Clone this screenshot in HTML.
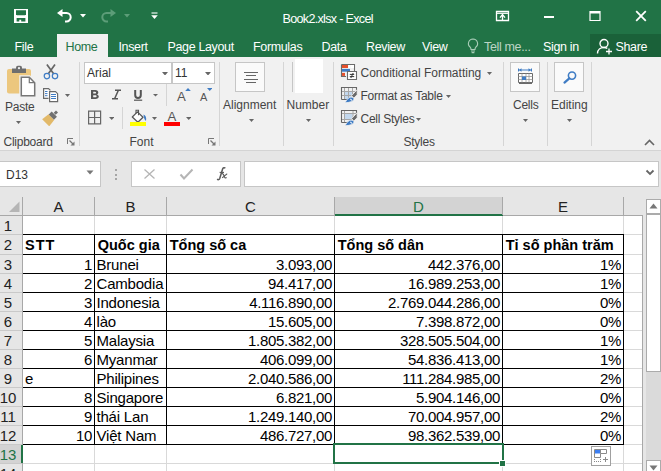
<!DOCTYPE html>
<html><head><meta charset="utf-8">
<style>
*{box-sizing:border-box;margin:0;padding:0}
html,body{width:661px;height:471px;overflow:hidden;background:#e6e6e6;font-family:"Liberation Sans",sans-serif}
.a{position:absolute;display:block}
.t{position:absolute;white-space:nowrap;line-height:1}
</style></head><body>
<div class="a" style="left:0px;top:0px;width:661px;height:57px;background:#217346;"></div>
<div class="a" style="left:590px;top:34px;width:71px;height:23px;background:#1a6139;"></div>
<div class="a" style="left:57px;top:34px;width:51px;height:23px;background:#f1f1f1;"></div>
<svg class="a" style="left:14px;top:9px;" width="14" height="14" viewBox="0 0 14 14"><path d="M0 0H14V14H0Z" fill="#fff"/><path d="M2 1.2H12V5.2L11 6.3H3L2 5.2Z" fill="#217346"/><path d="M2.6 9H11.4V12.6H7.2V10.8H5.3V12.6H2.6Z" fill="#217346"/></svg>
<svg class="a" style="left:55px;top:8px;" width="20" height="16" viewBox="0 0 20 16"><path d="M5 5H11.5A4.2 4.2 0 0 1 11.5 13.4H10" fill="none" stroke="#fff" stroke-width="2"/><path d="M2 5L7.5 1V9Z" fill="#fff"/></svg>
<svg class="a" style="left:79.5px;top:14px;" width="6" height="3.5" viewBox="0 0 6 3.5"><path d="M0 0H6L3.0 3.5Z" fill="#fff"/></svg>
<svg class="a" style="left:98px;top:8px;" width="20" height="16" viewBox="0 0 20 16"><path d="M15 5H8.5A4.2 4.2 0 0 0 8.5 13.4H10" fill="none" stroke="#5c9d78" stroke-width="2"/><path d="M18 5L12.5 1V9Z" fill="#5c9d78"/></svg>
<svg class="a" style="left:123.5px;top:14px;" width="6" height="3.5" viewBox="0 0 6 3.5"><path d="M0 0H6L3.0 3.5Z" fill="#5c9d78"/></svg>
<svg class="a" style="left:151px;top:12px;" width="7" height="8" viewBox="0 0 7 8"><path d="M0.5 1H6.5" stroke="#fff" stroke-width="1.1"/><path d="M0.2 3.3H6.8L3.5 7Z" fill="#fff"/></svg>
<div class="t" style="left:282.5px;top:13.03px;font-size:12.6px;color:#ffffff;letter-spacing:-0.7px;">Book2.xlsx - Excel</div>
<svg class="a" style="left:495px;top:10px;" width="15" height="12" viewBox="0 0 15 12"><path d="M1.5 1.5H13.5V10.5H1.5Z" fill="none" stroke="#fff" stroke-width="1.3"/><path d="M1.5 3.3H13.5" stroke="#fff" stroke-width="1.2"/><path d="M7.5 10.5V5" stroke="#fff" stroke-width="1.3"/><path d="M5 7.6L7.5 4.6L10 7.6" fill="none" stroke="#fff" stroke-width="1.4"/></svg>
<div class="a" style="left:544px;top:16px;width:10px;height:2px;background:#fff;"></div>
<svg class="a" style="left:589px;top:10px;" width="12" height="12" viewBox="0 0 12 12"><path d="M1 1.5H11V10.5H1Z" fill="none" stroke="#fff" stroke-width="1.2"/><path d="M1 2.5H11" stroke="#fff" stroke-width="2"/></svg>
<svg class="a" style="left:635px;top:10px;" width="12" height="12" viewBox="0 0 12 12"><path d="M1.2 1.2L10.8 10.8M10.8 1.2L1.2 10.8" stroke="#fff" stroke-width="1.8"/></svg>
<div class="t" style="left:14.5px;top:41.02px;font-size:12.5px;color:#fff;letter-spacing:-0.35px;">File</div>
<div class="t" style="left:65.5px;top:41.02px;font-size:12.5px;color:#217346;letter-spacing:-0.35px;">Home</div>
<div class="t" style="left:118.5px;top:41.02px;font-size:12.5px;color:#fff;letter-spacing:-0.35px;">Insert</div>
<div class="t" style="left:167.5px;top:41.02px;font-size:12.5px;color:#fff;letter-spacing:-0.35px;">Page Layout</div>
<div class="t" style="left:253px;top:41.02px;font-size:12.5px;color:#fff;letter-spacing:-0.35px;">Formulas</div>
<div class="t" style="left:321.5px;top:41.02px;font-size:12.5px;color:#fff;letter-spacing:-0.35px;">Data</div>
<div class="t" style="left:366px;top:41.02px;font-size:12.5px;color:#fff;letter-spacing:-0.35px;">Review</div>
<div class="t" style="left:422px;top:41.02px;font-size:12.5px;color:#fff;letter-spacing:-0.35px;">View</div>
<div class="t" style="left:484px;top:41.02px;font-size:12.5px;color:#bcd5c5;letter-spacing:-0.35px;">Tell me...</div>
<div class="t" style="left:543px;top:41.02px;font-size:12.5px;color:#fff;letter-spacing:-0.35px;">Sign in</div>
<div class="t" style="left:615.5px;top:41.02px;font-size:12.5px;color:#fff;letter-spacing:-0.35px;">Share</div>
<svg class="a" style="left:466px;top:37px;" width="14" height="17" viewBox="0 0 14 17"><path d="M7 2A4.6 4.6 0 0 0 4.3 10.3C5 11 5 11.6 5 12.5H9C9 11.6 9 11 9.7 10.3A4.6 4.6 0 0 0 7 2Z" fill="none" stroke="#a9cdb8" stroke-width="1.1"/><path d="M5 14H9M5.6 15.6H8.4" stroke="#a9cdb8" stroke-width="1.1"/></svg>
<svg class="a" style="left:596px;top:38px;" width="18" height="17" viewBox="0 0 18 17"><circle cx="8" cy="5.5" r="4" fill="none" stroke="#fff" stroke-width="1.4"/><path d="M1.5 15.5C1.5 11.5 4.5 9.5 8 9.5C9.5 9.5 10.5 9.9 11.3 10.3" fill="none" stroke="#fff" stroke-width="1.4"/><path d="M13 10.5V16.5M10 13.5H16" stroke="#fff" stroke-width="1.3"/></svg>
<div class="a" style="left:0px;top:57px;width:661px;height:93px;background:#f1f1f1;"></div>
<div class="a" style="left:0px;top:150px;width:661px;height:1px;background:#d4d4d4;"></div>
<div class="a" style="left:79px;top:62px;width:1px;height:84px;background:#d5d5d5;"></div>
<div class="a" style="left:219px;top:62px;width:1px;height:84px;background:#d5d5d5;"></div>
<div class="a" style="left:283px;top:62px;width:1px;height:84px;background:#d5d5d5;"></div>
<div class="a" style="left:333px;top:62px;width:1px;height:84px;background:#d5d5d5;"></div>
<div class="a" style="left:503px;top:62px;width:1px;height:84px;background:#d5d5d5;"></div>
<div class="a" style="left:547px;top:62px;width:1px;height:84px;background:#d5d5d5;"></div>
<div class="a" style="left:591px;top:62px;width:1px;height:84px;background:#d5d5d5;"></div>
<div class="t" style="left:3.5px;top:135.84px;font-size:12px;color:#444;letter-spacing:-0.25px;">Clipboard</div>
<div class="t" style="left:129.5px;top:135.84px;font-size:12px;color:#444;">Font</div>
<div class="t" style="left:403.5px;top:135.84px;font-size:12px;color:#444;letter-spacing:-0.25px;">Styles</div>
<svg class="a" style="left:67px;top:138px;" width="8" height="8" viewBox="0 0 8 8"><path d="M0.5 6V0.5H6" fill="none" stroke="#777" stroke-width="1"/><path d="M2.5 2.5L6.5 6.5" stroke="#777" stroke-width="1.2"/><path d="M7.5 3.5V7.5H3.5Z" fill="#777"/></svg>
<svg class="a" style="left:208px;top:138px;" width="8" height="8" viewBox="0 0 8 8"><path d="M0.5 6V0.5H6" fill="none" stroke="#777" stroke-width="1"/><path d="M2.5 2.5L6.5 6.5" stroke="#777" stroke-width="1.2"/><path d="M7.5 3.5V7.5H3.5Z" fill="#777"/></svg>
<svg class="a" style="left:644px;top:139px;" width="11" height="7" viewBox="0 0 11 7"><path d="M1 6L5.5 1.5L10 6" fill="none" stroke="#666" stroke-width="1.6"/></svg>
<svg class="a" style="left:5px;top:64px;" width="32" height="34" viewBox="0 0 32 34"><rect x="2" y="5" width="24" height="24.5" rx="2" fill="#ecc77e"/><path d="M7 4.5H21V9H7Z" fill="#6e6e6e" stroke="#f1f1f1" stroke-width="0"/><path d="M11 5V3.6A1.8 1.8 0 0 1 12.8 1.8H15.2A1.8 1.8 0 0 1 17 3.6V5Z" fill="#6e6e6e"/><circle cx="14" cy="4.2" r="1.1" fill="#f1f1f1"/><path d="M15.5 12.5H24.5L30.5 18.5V32.5H15.5Z" fill="#fff" stroke="#f1f1f1" stroke-width="2.5"/><path d="M16.3 13.3H24.3L29.7 18.7V31.7H16.3Z" fill="#fff" stroke="#777" stroke-width="1.5"/><path d="M24.3 13.3V18.7H29.7" fill="none" stroke="#777" stroke-width="1.2"/></svg>
<div class="t" style="left:5px;top:100.84px;font-size:12px;color:#444;letter-spacing:-0.25px;">Paste</div>
<svg class="a" style="left:15.5px;top:120.5px;" width="5" height="3" viewBox="0 0 5 3"><path d="M0 0H5L2.5 3Z" fill="#666"/></svg>
<svg class="a" style="left:42px;top:63px;" width="17" height="17" viewBox="0 0 17 17"><path d="M4.9 1.5L11.6 10.8M13 1.5L6.3 10.8" stroke="#666" stroke-width="1.7"/><circle cx="4.9" cy="13.1" r="2.7" fill="#f1f1f1" stroke="#3f7cc4" stroke-width="1.2"/><circle cx="13" cy="13.1" r="2.7" fill="#f1f1f1" stroke="#3f7cc4" stroke-width="1.2"/></svg>
<svg class="a" style="left:42px;top:87px;" width="18" height="16" viewBox="0 0 18 16"><path d="M1.6 1.6H6.5L8 3V11.4H1.6Z" fill="#fff" stroke="#6a6a6a" stroke-width="1.2"/><path d="M3 4.5H5.5M3 6.6H5.5M3 8.7H5.5" stroke="#3f7cc4" stroke-width="1"/><path d="M7.6 4.6H13.5L15.6 6.7V14.6H7.6Z" fill="#fff" stroke="#f1f1f1" stroke-width="2.2"/><path d="M7.6 4.6H13.5L15.6 6.7V14.6H7.6Z" fill="#fff" stroke="#6a6a6a" stroke-width="1.2"/><path d="M9 7.5H14M9 9.5H14M9 11.5H14" stroke="#3f7cc4" stroke-width="1"/></svg>
<svg class="a" style="left:65.0px;top:94px;" width="5" height="3" viewBox="0 0 5 3"><path d="M0 0H5L2.5 3Z" fill="#666"/></svg>
<svg class="a" style="left:42px;top:109px;" width="18" height="17" viewBox="0 0 18 17"><g transform="rotate(45 9 8.5)"><path d="M5 8H13L14 16H4Z" fill="#e2b969"/><rect x="5.3" y="3.8" width="7.4" height="4.2" fill="#707070"/><rect x="7.6" y="0" width="2.8" height="3.3" fill="#707070"/></g></svg>
<div class="a" style="left:84px;top:62px;width:88px;height:22px;background:#fff;border:1px solid #c6c6c6;"></div>
<div class="t" style="left:87px;top:66.84px;font-size:12px;color:#333;">Arial</div>
<svg class="a" style="left:162.0px;top:71.5px;" width="6" height="3.5" viewBox="0 0 6 3.5"><path d="M0 0H6L3.0 3.5Z" fill="#666"/></svg>
<div class="a" style="left:172px;top:62px;width:43px;height:22px;background:#fff;border:1px solid #c6c6c6;"></div>
<div class="t" style="left:175px;top:66.84px;font-size:12px;color:#333;">11</div>
<svg class="a" style="left:204.5px;top:71.5px;" width="6" height="3.5" viewBox="0 0 6 3.5"><path d="M0 0H6L3.0 3.5Z" fill="#666"/></svg>
<svg class="a" style="left:90px;top:89px;" width="10" height="11" viewBox="0 0 10 11"><path d="M1 1H5.2C7.3 1 8.3 2 8.3 3.4C8.3 4.4 7.7 5.1 6.8 5.4C8 5.6 8.8 6.5 8.8 7.6C8.8 9.3 7.5 10 5.5 10H1Z M3.2 2.7V4.6H4.9C5.7 4.6 6.1 4.2 6.1 3.6C6.1 3 5.7 2.7 4.9 2.7Z M3.2 6.2V8.3H5.2C6.1 8.3 6.6 7.9 6.6 7.2C6.6 6.6 6.1 6.2 5.2 6.2Z" fill="#555" fill-rule="evenodd"/></svg>
<svg class="a" style="left:111px;top:89px;" width="11" height="11" viewBox="0 0 11 11"><path d="M4 1.2H10M1 9.8H7M7.4 1.2L3.6 9.8" stroke="#555" stroke-width="1.5"/></svg>
<svg class="a" style="left:133px;top:89px;" width="11" height="12" viewBox="0 0 11 12"><path d="M2.2 1V6C2.2 8 3.3 9 5 9C6.7 9 7.8 8 7.8 6V1" fill="none" stroke="#555" stroke-width="2"/><path d="M1 11.2H9.2" stroke="#555" stroke-width="1.2"/></svg>
<svg class="a" style="left:153.0px;top:94.3px;" width="5" height="2.5" viewBox="0 0 5 2.5"><path d="M0 0H5L2.5 2.5Z" fill="#666"/></svg>
<div class="a" style="left:166px;top:84px;width:1px;height:22px;background:#d5d5d5;"></div>
<div class="t" style="left:177px;top:89.83px;font-size:13.2px;color:#555;">A</div>
<svg class="a" style="left:184.5px;top:87.5px;" width="6" height="3.2" viewBox="0 0 6 3.2"><path d="M0 3.2L3 0L6 3.2Z" fill="#3f7cc4"/></svg>
<div class="t" style="left:200px;top:91.69px;font-size:11px;color:#555;">A</div>
<svg class="a" style="left:206.75px;top:87.6px;" width="5.5" height="3" viewBox="0 0 5.5 3"><path d="M0 0H5.5L2.75 3Z" fill="#3f7cc4"/></svg>
<svg class="a" style="left:88px;top:110px;" width="14" height="15" viewBox="0 0 14 15"><path d="M0.6 1.1H12.6V13.9H0.6ZM6.6 1.1V13.9M0.6 7.5H12.6" fill="none" stroke="#666" stroke-width="1.2"/></svg>
<svg class="a" style="left:108.75px;top:117.3px;" width="5.5" height="3" viewBox="0 0 5.5 3"><path d="M0 0H5.5L2.75 3Z" fill="#666"/></svg>
<div class="a" style="left:122px;top:107px;width:1px;height:22px;background:#d5d5d5;"></div>
<svg class="a" style="left:129px;top:107px;" width="19" height="16" viewBox="0 0 19 16"><path d="M3.3 10L8.4 4.9L14 10.2L8.9 15.2Z" fill="#fff" stroke="#555" stroke-width="1.2" stroke-linejoin="round"/><path d="M7 6.5V3.2H9.5V8.3" fill="none" stroke="#555" stroke-width="1.1"/><path d="M14.5 7.5C16.8 8.3 17.6 10.8 17 14C15.6 13 14.6 10.5 14.5 7.5Z" fill="#3f7cc4"/></svg>
<div class="a" style="left:130px;top:122px;width:16px;height:4px;background:#ffff00;"></div>
<svg class="a" style="left:152.0px;top:117.3px;" width="5" height="3" viewBox="0 0 5 3"><path d="M0 0H5L2.5 3Z" fill="#666"/></svg>
<div class="t" style="left:167.5px;top:110.33px;font-size:13.2px;color:#555;">A</div>
<div class="a" style="left:164px;top:122px;width:16px;height:4px;background:#ff0000;"></div>
<svg class="a" style="left:185.75px;top:117.3px;" width="5.5" height="3" viewBox="0 0 5.5 3"><path d="M0 0H5.5L2.75 3Z" fill="#666"/></svg>
<div class="a" style="left:235px;top:62px;width:30px;height:30px;background:#fafafa;border:1px solid #c6c6c6;"></div>
<svg class="a" style="left:243px;top:71px;" width="16" height="13" viewBox="0 0 16 13"><path d="M1 1.5H15M3 4.5H13M1 8.5H15M3 11.5H13" stroke="#666" stroke-width="1"/></svg>
<div class="t" style="left:223px;top:98.84px;font-size:12px;color:#444;">Alignment</div>
<svg class="a" style="left:249.0px;top:119.3px;" width="5" height="3" viewBox="0 0 5 3"><path d="M0 0H5L2.5 3Z" fill="#666"/></svg>
<div class="a" style="left:292px;top:62px;width:1px;height:30px;background:#c6c6c6;"></div>
<div class="a" style="left:295px;top:59px;width:28px;height:34px;background:#ffffff;"></div>
<div class="t" style="left:286.5px;top:98.84px;font-size:12px;color:#444;">Number</div>
<svg class="a" style="left:306.0px;top:119.3px;" width="5" height="3" viewBox="0 0 5 3"><path d="M0 0H5L2.5 3Z" fill="#666"/></svg>
<svg class="a" style="left:340px;top:63px;" width="18" height="18" viewBox="0 0 18 18"><path d="M1.5 1.5H14.5V13" fill="none" stroke="#6a6a6a" stroke-width="1.1"/><path d="M1.5 1.5V13.5H6" fill="none" stroke="#6a6a6a" stroke-width="1.1"/><path d="M2 2H8V5H2Z" fill="#e4502c"/><path d="M8.5 2H10.5V5H8.5ZM11 2H14V5H11Z" fill="#fff"/><path d="M2 5.9H10V8.7H2Z" fill="#3f7cc4"/><path d="M2 9.9H5V12.9H2Z" fill="#e4502c"/><path d="M7.5 8.5H16.5V16.5H7.5Z" fill="#fff" stroke="#6a6a6a" stroke-width="1.1"/><path d="M9.8 11.4H14.2M9.8 13.6H14.2M13.2 10L10.8 15" stroke="#333" stroke-width="1"/></svg>
<div class="t" style="left:360.5px;top:66.84px;font-size:12px;color:#444;">Conditional Formatting</div>
<svg class="a" style="left:487.0px;top:71.5px;" width="5" height="3" viewBox="0 0 5 3"><path d="M0 0H5L2.5 3Z" fill="#666"/></svg>
<svg class="a" style="left:340px;top:86px;" width="19" height="18" viewBox="0 0 19 18"><path d="M5 6H12V13H5Z" fill="#c3d8ee"/><path d="M4.5 2V13M8.5 2V13M12.5 2V11M2 5.5H16M2 9.5H14" stroke="#a6a6a6" stroke-width="1"/><path d="M1.5 13.5V1.5H16.5V5.5M1.5 13.5H7" fill="none" stroke="#666" stroke-width="1.1"/><path d="M17.2 3.6V8.7L13.7 12.3L11.6 9.6Z" fill="#6a6a6a" stroke="#f1f1f1" stroke-width="0.9"/><path d="M5 16.8C6.4 14.2 7.5 12.6 9.3 11.6C10.8 10.9 13 10.9 13.9 12.2C14.4 13.2 13.3 14.8 11.5 15.6C9.5 16.4 7 16.7 5 16.8Z" fill="#3f7cc4" stroke="#f1f1f1" stroke-width="0.8"/><path d="M10.4 12.8L11.9 14.5" fill="none" stroke="#fff" stroke-width="1.1"/></svg>
<div class="t" style="left:360.5px;top:89.84px;font-size:12px;color:#444;letter-spacing:-0.25px;">Format as Table</div>
<svg class="a" style="left:446.0px;top:94.5px;" width="5" height="3" viewBox="0 0 5 3"><path d="M0 0H5L2.5 3Z" fill="#666"/></svg>
<svg class="a" style="left:340px;top:109px;" width="19" height="18" viewBox="0 0 19 18"><path d="M5 5H12.5V10H5Z" fill="#c3d8ee"/><path d="M4.5 2V13M13 2V10M2 4.5H16M2 10.5H12" stroke="#a6a6a6" stroke-width="1"/><path d="M1.5 13.5V1.5H16.5V5.5M1.5 13.5H7" fill="none" stroke="#666" stroke-width="1.1"/><path d="M17.2 3.6V8.7L13.7 12.3L11.6 9.6Z" fill="#6a6a6a" stroke="#f1f1f1" stroke-width="0.9"/><path d="M5 16.8C6.4 14.2 7.5 12.6 9.3 11.6C10.8 10.9 13 10.9 13.9 12.2C14.4 13.2 13.3 14.8 11.5 15.6C9.5 16.4 7 16.7 5 16.8Z" fill="#3f7cc4" stroke="#f1f1f1" stroke-width="0.8"/><path d="M10.4 12.8L11.9 14.5" fill="none" stroke="#fff" stroke-width="1.1"/></svg>
<div class="t" style="left:360.5px;top:112.84px;font-size:12px;color:#444;letter-spacing:-0.25px;">Cell Styles</div>
<svg class="a" style="left:416.0px;top:117.5px;" width="5" height="3" viewBox="0 0 5 3"><path d="M0 0H5L2.5 3Z" fill="#666"/></svg>
<div class="a" style="left:510px;top:62px;width:30px;height:30px;background:#fafafa;border:1px solid #c6c6c6;"></div>
<svg class="a" style="left:516px;top:67px;" width="18" height="19" viewBox="0 0 18 19"><path d="M2.5 1.5V4.5M15.5 1.5V4.5M3 3H15" stroke="#3f7cc4" stroke-width="1"/><path d="M3 3L5.5 1.3V4.7ZM15 3L12.5 1.3V4.7Z" fill="#3f7cc4"/><path d="M2.5 6.5H16.5V15.5H2.5Z" fill="#fff" stroke="#6a6a6a" stroke-width="1"/><path d="M2.5 9.5H16.5M2.5 12.5H16.5M6 6.5V15.5M10 6.5V15.5M13 6.5V15.5" stroke="#9a9a9a" stroke-width="0.8"/><path d="M6 9.5H10V13H6Z" fill="#3f7cc4"/><path d="M3 16.5H16" stroke="#6a6a6a" stroke-width="1"/></svg>
<div class="t" style="left:513px;top:98.84px;font-size:12px;color:#444;letter-spacing:-0.25px;">Cells</div>
<svg class="a" style="left:523.0px;top:119.3px;" width="5" height="3" viewBox="0 0 5 3"><path d="M0 0H5L2.5 3Z" fill="#666"/></svg>
<div class="a" style="left:554px;top:62px;width:30px;height:30px;background:#fafafa;border:1px solid #c6c6c6;"></div>
<svg class="a" style="left:562px;top:70px;" width="16" height="14" viewBox="0 0 16 14"><circle cx="10" cy="5.6" r="3.6" fill="none" stroke="#3f7cc4" stroke-width="1.6"/><path d="M7.3 8.4L2.5 12.6" stroke="#3f7cc4" stroke-width="2.2" stroke-linecap="round"/></svg>
<div class="t" style="left:551px;top:98.84px;font-size:12px;color:#444;">Editing</div>
<svg class="a" style="left:567.0px;top:119.3px;" width="5" height="3" viewBox="0 0 5 3"><path d="M0 0H5L2.5 3Z" fill="#666"/></svg>
<div class="a" style="left:-1px;top:161px;width:102px;height:26px;background:#fff;border:1px solid #c6c6c6;"></div>
<div class="t" style="left:6px;top:168.84px;font-size:12px;color:#333;">D13</div>
<svg class="a" style="left:86px;top:170px;" width="8" height="5" viewBox="0 0 8 5"><path d="M0.5 0.5H7.5L4 4.5Z" fill="#777"/></svg>
<div class="a" style="left:114.5px;top:169px;width:2px;height:2px;background:#a6a6a6;"></div>
<div class="a" style="left:114.5px;top:173.5px;width:2px;height:2px;background:#a6a6a6;"></div>
<div class="a" style="left:114.5px;top:178px;width:2px;height:2px;background:#a6a6a6;"></div>
<div class="a" style="left:131px;top:161px;width:110px;height:26px;background:#fff;border:1px solid #c6c6c6;"></div>
<svg class="a" style="left:143px;top:168px;" width="14" height="12" viewBox="0 0 14 12"><path d="M1.5 1.5L11.5 10.5M11.5 1.5L1.5 10.5" stroke="#b5b5b5" stroke-width="1.3"/></svg>
<svg class="a" style="left:179px;top:168px;" width="15" height="13" viewBox="0 0 15 13"><path d="M1.5 6.5L5 10.5L13.5 1.5" fill="none" stroke="#b5b5b5" stroke-width="2"/></svg>
<svg class="a" style="left:214px;top:166px;" width="16" height="15" viewBox="0 0 16 15"><path d="M11.3 2.3C10.5 1.4 9.1 1.6 8.6 3.1L5.8 12.3C5.3 13.8 4.1 14 3.1 13.2" fill="none" stroke="#5a5a5a" stroke-width="1.5"/><path d="M5.6 6.4H10" stroke="#5a5a5a" stroke-width="1.1"/><path d="M7.8 7.8C8.8 7.4 9.4 8 9.8 9.2L10.6 11.2C11 12 11.8 12.2 12.6 11.6M13.2 7.8C12.6 7.9 11.2 9.5 8.2 11.8" fill="none" stroke="#5a5a5a" stroke-width="1.2"/></svg>
<div class="a" style="left:244px;top:161px;width:415px;height:26px;background:#fff;border:1px solid #c6c6c6;"></div>
<svg class="a" style="left:645px;top:169px;" width="10" height="7" viewBox="0 0 10 7"><path d="M1.5 1.5L5 5L8.5 1.5" fill="none" stroke="#666" stroke-width="1.8"/></svg>
<div class="a" style="left:0px;top:197px;width:643px;height:274px;background:#ffffff;"></div>
<div class="a" style="left:0px;top:197px;width:643px;height:18px;background:#e6e6e6;"></div>
<div class="a" style="left:0px;top:215px;width:22px;height:256px;background:#e6e6e6;"></div>
<svg class="a" style="left:9px;top:200px;" width="12" height="13" viewBox="0 0 12 13"><path d="M10.5 1.5V12H0Z" fill="#b5b5b5"/></svg>
<div class="a" style="left:335px;top:197px;width:167px;height:17px;background:#d3d3d3;"></div>
<div class="a" style="left:335px;top:214px;width:168px;height:2px;background:#217346;"></div>
<div class="a" style="left:23px;top:234px;width:620px;height:1px;background:#d9d9d9;"></div>
<div class="a" style="left:0px;top:234px;width:22px;height:1px;background:#c9c9c9;"></div>
<div class="a" style="left:23px;top:254px;width:620px;height:1px;background:#d9d9d9;"></div>
<div class="a" style="left:0px;top:254px;width:22px;height:1px;background:#c9c9c9;"></div>
<div class="a" style="left:23px;top:273px;width:620px;height:1px;background:#d9d9d9;"></div>
<div class="a" style="left:0px;top:273px;width:22px;height:1px;background:#c9c9c9;"></div>
<div class="a" style="left:23px;top:292px;width:620px;height:1px;background:#d9d9d9;"></div>
<div class="a" style="left:0px;top:292px;width:22px;height:1px;background:#c9c9c9;"></div>
<div class="a" style="left:23px;top:311px;width:620px;height:1px;background:#d9d9d9;"></div>
<div class="a" style="left:0px;top:311px;width:22px;height:1px;background:#c9c9c9;"></div>
<div class="a" style="left:23px;top:330px;width:620px;height:1px;background:#d9d9d9;"></div>
<div class="a" style="left:0px;top:330px;width:22px;height:1px;background:#c9c9c9;"></div>
<div class="a" style="left:23px;top:349px;width:620px;height:1px;background:#d9d9d9;"></div>
<div class="a" style="left:0px;top:349px;width:22px;height:1px;background:#c9c9c9;"></div>
<div class="a" style="left:23px;top:368px;width:620px;height:1px;background:#d9d9d9;"></div>
<div class="a" style="left:0px;top:368px;width:22px;height:1px;background:#c9c9c9;"></div>
<div class="a" style="left:23px;top:387px;width:620px;height:1px;background:#d9d9d9;"></div>
<div class="a" style="left:0px;top:387px;width:22px;height:1px;background:#c9c9c9;"></div>
<div class="a" style="left:23px;top:406px;width:620px;height:1px;background:#d9d9d9;"></div>
<div class="a" style="left:0px;top:406px;width:22px;height:1px;background:#c9c9c9;"></div>
<div class="a" style="left:23px;top:425px;width:620px;height:1px;background:#d9d9d9;"></div>
<div class="a" style="left:0px;top:425px;width:22px;height:1px;background:#c9c9c9;"></div>
<div class="a" style="left:23px;top:444px;width:620px;height:1px;background:#d9d9d9;"></div>
<div class="a" style="left:0px;top:444px;width:22px;height:1px;background:#c9c9c9;"></div>
<div class="a" style="left:23px;top:463px;width:620px;height:1px;background:#d9d9d9;"></div>
<div class="a" style="left:0px;top:463px;width:22px;height:1px;background:#c9c9c9;"></div>
<div class="a" style="left:94px;top:216px;width:1px;height:255px;background:#d9d9d9;"></div>
<div class="a" style="left:94px;top:197px;width:1px;height:18px;background:#a8a8a8;"></div>
<div class="a" style="left:166px;top:216px;width:1px;height:255px;background:#d9d9d9;"></div>
<div class="a" style="left:166px;top:197px;width:1px;height:18px;background:#a8a8a8;"></div>
<div class="a" style="left:334px;top:216px;width:1px;height:255px;background:#d9d9d9;"></div>
<div class="a" style="left:334px;top:197px;width:1px;height:18px;background:#a8a8a8;"></div>
<div class="a" style="left:502px;top:216px;width:1px;height:255px;background:#d9d9d9;"></div>
<div class="a" style="left:502px;top:197px;width:1px;height:18px;background:#a8a8a8;"></div>
<div class="a" style="left:623px;top:216px;width:1px;height:255px;background:#d9d9d9;"></div>
<div class="a" style="left:623px;top:197px;width:1px;height:18px;background:#a8a8a8;"></div>
<div class="a" style="left:0px;top:215px;width:335px;height:1px;background:#a8a8a8;"></div>
<div class="a" style="left:503px;top:215px;width:140px;height:1px;background:#a8a8a8;"></div>
<div class="a" style="left:22px;top:197px;width:1px;height:274px;background:#a8a8a8;"></div>
<div class="a" style="left:642px;top:215px;width:1px;height:256px;background:#a8a8a8;"></div>
<div class="t" style="left:-91.5px;width:300px;text-align:center;top:199.30px;font-size:15px;color:#222;">A</div>
<div class="t" style="left:-19.5px;width:300px;text-align:center;top:199.30px;font-size:15px;color:#222;">B</div>
<div class="t" style="left:100.5px;width:300px;text-align:center;top:199.30px;font-size:15px;color:#222;">C</div>
<div class="t" style="left:268.5px;width:300px;text-align:center;top:199.30px;font-size:15px;color:#217346;">D</div>
<div class="t" style="left:413.0px;width:300px;text-align:center;top:199.30px;font-size:15px;color:#222;">E</div>
<div class="t" style="left:-142px;width:300px;text-align:center;top:218.30px;font-size:15px;color:#222;">1</div>
<div class="t" style="left:-142px;width:300px;text-align:center;top:237.30px;font-size:15px;color:#222;">2</div>
<div class="t" style="left:-142px;width:300px;text-align:center;top:257.30px;font-size:15px;color:#222;">3</div>
<div class="t" style="left:-142px;width:300px;text-align:center;top:276.30px;font-size:15px;color:#222;">4</div>
<div class="t" style="left:-142px;width:300px;text-align:center;top:295.30px;font-size:15px;color:#222;">5</div>
<div class="t" style="left:-142px;width:300px;text-align:center;top:314.30px;font-size:15px;color:#222;">6</div>
<div class="t" style="left:-142px;width:300px;text-align:center;top:333.30px;font-size:15px;color:#222;">7</div>
<div class="t" style="left:-142px;width:300px;text-align:center;top:352.30px;font-size:15px;color:#222;">8</div>
<div class="t" style="left:-142px;width:300px;text-align:center;top:371.30px;font-size:15px;color:#222;">9</div>
<div class="t" style="left:-142px;width:300px;text-align:center;top:390.30px;font-size:15px;color:#222;">10</div>
<div class="t" style="left:-142px;width:300px;text-align:center;top:409.30px;font-size:15px;color:#222;">11</div>
<div class="t" style="left:-142px;width:300px;text-align:center;top:428.30px;font-size:15px;color:#222;">12</div>
<div class="a" style="left:0px;top:445px;width:21px;height:18px;background:#d3d3d3;"></div>
<div class="a" style="left:21px;top:445px;width:2px;height:18px;background:#217346;"></div>
<div class="t" style="left:-142px;width:300px;text-align:center;top:447.30px;font-size:15px;color:#217346;">13</div>
<div class="t" style="left:-142px;width:300px;text-align:center;top:466.30px;font-size:15px;color:#222;">14</div>
<div class="a" style="left:23px;top:234px;width:601px;height:1px;background:#000;"></div>
<div class="a" style="left:23px;top:254px;width:601px;height:1px;background:#000;"></div>
<div class="a" style="left:23px;top:273px;width:601px;height:1px;background:#000;"></div>
<div class="a" style="left:23px;top:292px;width:601px;height:1px;background:#000;"></div>
<div class="a" style="left:23px;top:311px;width:601px;height:1px;background:#000;"></div>
<div class="a" style="left:23px;top:330px;width:601px;height:1px;background:#000;"></div>
<div class="a" style="left:23px;top:349px;width:601px;height:1px;background:#000;"></div>
<div class="a" style="left:23px;top:368px;width:601px;height:1px;background:#000;"></div>
<div class="a" style="left:23px;top:387px;width:601px;height:1px;background:#000;"></div>
<div class="a" style="left:23px;top:406px;width:601px;height:1px;background:#000;"></div>
<div class="a" style="left:23px;top:425px;width:601px;height:1px;background:#000;"></div>
<div class="a" style="left:23px;top:444px;width:601px;height:1px;background:#000;"></div>
<div class="a" style="left:94px;top:234px;width:1px;height:211px;background:#000;"></div>
<div class="a" style="left:166px;top:234px;width:1px;height:211px;background:#000;"></div>
<div class="a" style="left:334px;top:234px;width:1px;height:211px;background:#000;"></div>
<div class="a" style="left:502px;top:234px;width:1px;height:211px;background:#000;"></div>
<div class="a" style="left:623px;top:234px;width:1px;height:211px;background:#000;"></div>
<div class="t" style="left:25.0px;top:237.73px;font-size:14.5px;color:#000;font-weight:bold;letter-spacing:1px;">STT</div>
<div class="t" style="left:97.7px;top:237.73px;font-size:14.5px;color:#000;font-weight:bold;">Quốc gia</div>
<div class="t" style="left:169.7px;top:237.73px;font-size:14.5px;color:#000;font-weight:bold;">Tổng số ca</div>
<div class="t" style="left:337.7px;top:237.73px;font-size:14.5px;color:#000;font-weight:bold;">Tổng số dân</div>
<div class="t" style="left:505.7px;top:237.73px;font-size:14.5px;color:#000;font-weight:bold;">Tỉ số phần trăm</div>
<div class="t" style="right:569px;top:257.30px;font-size:15px;color:#000;letter-spacing:-0.3px;">1</div>
<div class="t" style="left:96.5px;top:257.30px;font-size:15px;color:#000;letter-spacing:-0.2px;">Brunei</div>
<div class="t" style="right:329px;top:257.30px;font-size:15px;color:#000;letter-spacing:-0.3px;">3.093,00</div>
<div class="t" style="right:161px;top:257.30px;font-size:15px;color:#000;letter-spacing:-0.3px;">442.376,00</div>
<div class="t" style="right:40px;top:257.30px;font-size:15px;color:#000;letter-spacing:-0.3px;">1%</div>
<div class="t" style="right:569px;top:276.30px;font-size:15px;color:#000;letter-spacing:-0.3px;">2</div>
<div class="t" style="left:96.5px;top:276.30px;font-size:15px;color:#000;letter-spacing:-0.2px;">Cambodia</div>
<div class="t" style="right:329px;top:276.30px;font-size:15px;color:#000;letter-spacing:-0.3px;">94.417,00</div>
<div class="t" style="right:161px;top:276.30px;font-size:15px;color:#000;letter-spacing:-0.3px;">16.989.253,00</div>
<div class="t" style="right:40px;top:276.30px;font-size:15px;color:#000;letter-spacing:-0.3px;">1%</div>
<div class="t" style="right:569px;top:295.30px;font-size:15px;color:#000;letter-spacing:-0.3px;">3</div>
<div class="t" style="left:96.5px;top:295.30px;font-size:15px;color:#000;letter-spacing:-0.2px;">Indonesia</div>
<div class="t" style="right:329px;top:295.30px;font-size:15px;color:#000;letter-spacing:-0.3px;">4.116.890,00</div>
<div class="t" style="right:161px;top:295.30px;font-size:15px;color:#000;letter-spacing:-0.3px;">2.769.044.286,00</div>
<div class="t" style="right:40px;top:295.30px;font-size:15px;color:#000;letter-spacing:-0.3px;">0%</div>
<div class="t" style="right:569px;top:314.30px;font-size:15px;color:#000;letter-spacing:-0.3px;">4</div>
<div class="t" style="left:96.5px;top:314.30px;font-size:15px;color:#000;letter-spacing:-0.2px;">lào</div>
<div class="t" style="right:329px;top:314.30px;font-size:15px;color:#000;letter-spacing:-0.3px;">15.605,00</div>
<div class="t" style="right:161px;top:314.30px;font-size:15px;color:#000;letter-spacing:-0.3px;">7.398.872,00</div>
<div class="t" style="right:40px;top:314.30px;font-size:15px;color:#000;letter-spacing:-0.3px;">0%</div>
<div class="t" style="right:569px;top:333.30px;font-size:15px;color:#000;letter-spacing:-0.3px;">5</div>
<div class="t" style="left:96.5px;top:333.30px;font-size:15px;color:#000;letter-spacing:-0.2px;">Malaysia</div>
<div class="t" style="right:329px;top:333.30px;font-size:15px;color:#000;letter-spacing:-0.3px;">1.805.382,00</div>
<div class="t" style="right:161px;top:333.30px;font-size:15px;color:#000;letter-spacing:-0.3px;">328.505.504,00</div>
<div class="t" style="right:40px;top:333.30px;font-size:15px;color:#000;letter-spacing:-0.3px;">1%</div>
<div class="t" style="right:569px;top:352.30px;font-size:15px;color:#000;letter-spacing:-0.3px;">6</div>
<div class="t" style="left:96.5px;top:352.30px;font-size:15px;color:#000;letter-spacing:-0.2px;">Myanmar</div>
<div class="t" style="right:329px;top:352.30px;font-size:15px;color:#000;letter-spacing:-0.3px;">406.099,00</div>
<div class="t" style="right:161px;top:352.30px;font-size:15px;color:#000;letter-spacing:-0.3px;">54.836.413,00</div>
<div class="t" style="right:40px;top:352.30px;font-size:15px;color:#000;letter-spacing:-0.3px;">1%</div>
<div class="t" style="left:25.0px;top:371.30px;font-size:15px;color:#000;letter-spacing:-0.2px;">e</div>
<div class="t" style="left:96.5px;top:371.30px;font-size:15px;color:#000;letter-spacing:-0.2px;">Philipines</div>
<div class="t" style="right:329px;top:371.30px;font-size:15px;color:#000;letter-spacing:-0.3px;">2.040.586,00</div>
<div class="t" style="right:161px;top:371.30px;font-size:15px;color:#000;letter-spacing:-0.3px;">111.284.985,00</div>
<div class="t" style="right:40px;top:371.30px;font-size:15px;color:#000;letter-spacing:-0.3px;">2%</div>
<div class="t" style="right:569px;top:390.30px;font-size:15px;color:#000;letter-spacing:-0.3px;">8</div>
<div class="t" style="left:96.5px;top:390.30px;font-size:15px;color:#000;letter-spacing:-0.2px;">Singapore</div>
<div class="t" style="right:329px;top:390.30px;font-size:15px;color:#000;letter-spacing:-0.3px;">6.821,00</div>
<div class="t" style="right:161px;top:390.30px;font-size:15px;color:#000;letter-spacing:-0.3px;">5.904.146,00</div>
<div class="t" style="right:40px;top:390.30px;font-size:15px;color:#000;letter-spacing:-0.3px;">0%</div>
<div class="t" style="right:569px;top:409.30px;font-size:15px;color:#000;letter-spacing:-0.3px;">9</div>
<div class="t" style="left:96.5px;top:409.30px;font-size:15px;color:#000;letter-spacing:-0.2px;">thái Lan</div>
<div class="t" style="right:329px;top:409.30px;font-size:15px;color:#000;letter-spacing:-0.3px;">1.249.140,00</div>
<div class="t" style="right:161px;top:409.30px;font-size:15px;color:#000;letter-spacing:-0.3px;">70.004.957,00</div>
<div class="t" style="right:40px;top:409.30px;font-size:15px;color:#000;letter-spacing:-0.3px;">2%</div>
<div class="t" style="right:569px;top:428.30px;font-size:15px;color:#000;letter-spacing:-0.3px;">10</div>
<div class="t" style="left:96.5px;top:428.30px;font-size:15px;color:#000;letter-spacing:-0.2px;">Việt Nam</div>
<div class="t" style="right:329px;top:428.30px;font-size:15px;color:#000;letter-spacing:-0.3px;">486.727,00</div>
<div class="t" style="right:161px;top:428.30px;font-size:15px;color:#000;letter-spacing:-0.3px;">98.362.539,00</div>
<div class="t" style="right:40px;top:428.30px;font-size:15px;color:#000;letter-spacing:-0.3px;">0%</div>
<div class="a" style="left:333px;top:443px;width:171px;height:21px;background:transparent;border:2px solid #217346;"></div>
<div class="a" style="left:499px;top:460px;width:7px;height:7px;background:#fff;"></div>
<div class="a" style="left:500px;top:461px;width:5px;height:5px;background:#217346;"></div>
<div class="a" style="left:591px;top:446px;width:20px;height:20px;background:#fff;border:1px solid #a0a0a0;"></div>
<svg class="a" style="left:593px;top:448px;" width="16" height="16" viewBox="0 0 16 16"><path d="M1.5 1.5H13.5V5.5H7.5V9.5H1.5Z" fill="#fff" stroke="#8a8a8a" stroke-width="1"/><path d="M2 2H7V5.5H2Z" fill="#3d7ff2"/><path d="M7.5 1.5V5.5" stroke="#8a8a8a" stroke-width="1"/><path d="M1 11H2V12H1ZM7 11H8V12H7ZM1 13H2V14H1ZM3 13H4V14H3ZM5 13H6V14H5ZM7 13H8V14H7Z" fill="#8a8a8a"/><path d="M12.5 9V14M10 11.5H15" stroke="#8a8a8a" stroke-width="1"/></svg>
<div class="a" style="left:643px;top:197px;width:18px;height:274px;background:#e6e6e6;"></div>
<div class="a" style="left:646px;top:199px;width:15px;height:272px;background:#dadada;"></div>
<div class="a" style="left:646px;top:199px;width:15px;height:15px;background:#fff;border:1px solid #ababab;"></div>
<svg class="a" style="left:649px;top:203px;" width="9" height="6" viewBox="0 0 9 6"><path d="M0.5 5.5H8.5L4.5 0.5Z" fill="#777"/></svg>
<div class="a" style="left:646px;top:214px;width:15px;height:158px;background:#fff;border:1px solid #ababab;"></div>
<div class="a" style="left:646px;top:460px;width:15px;height:15px;background:#fff;border:1px solid #ababab;"></div>
<svg class="a" style="left:649px;top:465px;" width="9" height="6" viewBox="0 0 9 6"><path d="M0.5 0.5H8.5L4.5 5.5Z" fill="#777"/></svg>
</body></html>
